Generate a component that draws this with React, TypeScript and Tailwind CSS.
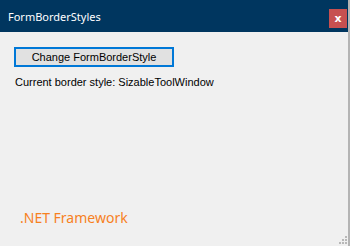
import React from "react";

export default function App() {
  const dots: [number, number][] = [
    [345, 236],
    [342, 239],
    [345, 239],
    [339, 242],
    [342, 242],
    [345, 242],
  ];
  return (
    <div className="relative w-[350px] h-[246px] bg-[#f0f0f0] overflow-hidden flex">
      <div className="flex-1 flex flex-col">
        <div className="h-[32px] bg-[#00365f] flex items-start justify-between">
          <div
            className="pl-[8px] pt-[9px] text-white text-[11px] leading-[15px]"
            style={{ fontFamily: '"Noto Sans", "Open Sans", sans-serif' }}
          >
            FormBorderStyles
          </div>
          <div className="mt-[9px] mr-[1px] w-[18px] h-[19px] bg-[#c75050] flex items-center justify-center">
            <span
              className="text-white text-[11px] font-bold leading-none -mt-[1px]"
              style={{ fontFamily: '"DejaVu Sans", sans-serif' }}
            >
              x
            </span>
          </div>
        </div>
        <div
          className="flex-1 flex flex-col pl-[14px]"
          style={{ fontFamily: '"Liberation Sans", Arial, sans-serif' }}
        >
          <button className="mt-[15px] w-[160px] h-[20px] border-2 border-[#0078d7] bg-[#e1e1e1] text-[11px] text-black leading-none flex items-center justify-center">
            Change FormBorderStyle
          </button>
          <div className="mt-[9px] pl-[1px] text-[11px] leading-[13px] text-black">
            Current border style: SizableToolWindow
          </div>
          <div
            className="mt-[120px] pl-[6px] text-[14px] leading-[18px] text-[#f7811f]"
            style={{ fontFamily: '"Noto Sans", "Open Sans", sans-serif' }}
          >
            .NET Framework
          </div>
        </div>
      </div>
      <div className="w-[2px] bg-[#b4b4b4]" />
      {dots.map(([x, y], i) => (
        <div
          key={i}
          className="absolute w-[2px] h-[2px] bg-[#b8b8b8]"
          style={{ left: x, top: y }}
        />
      ))}
    </div>
  );
}
